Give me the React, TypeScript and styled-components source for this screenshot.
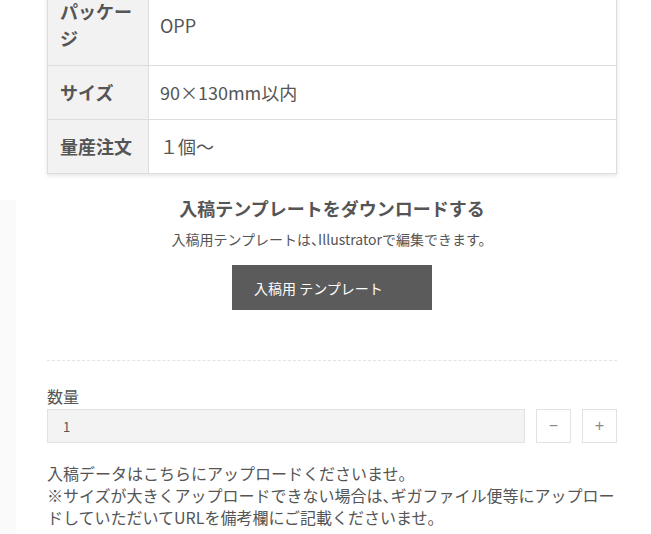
import styled, { createGlobalStyle } from "styled-components";

const GlobalStyle = createGlobalStyle`
  html, body {
    margin: 0;
    padding: 0;
    background: #fff linear-gradient(#fafafa, #fafafa) no-repeat 0 200px / 16px 100%;
    min-height: 100%;
  }
  body {
    font-family: "Noto Sans CJK JP", "Noto Sans", sans-serif;
    color: #555;
  }
`;

const specs = [
  { label: "パッケージ", value: "OPP" },
  { label: "サイズ", value: "90×130mm以内" },
  { label: "量産注文", value: "１個〜" },
];

const App = () => {
  return (
    <>
      <GlobalStyle />
      <Page>
        <SpecTable>
          <tbody>
            {specs.map((s) => (
              <tr key={s.label}>
                <th>{s.label}</th>
                <td>{s.value}</td>
              </tr>
            ))}
          </tbody>
        </SpecTable>

        <Download>
          <h3 className='title'>入稿テンプレートをダウンロードする</h3>
          <p className='note'>
            入稿用テンプレートは<Comma>、</Comma>Illustratorで編集できます。
          </p>
          <TemplateButton>入稿用 テンプレート</TemplateButton>
        </Download>

        <Divider />

        <Quantity>
          <label className='label'>数量</label>
          <div className='row'>
            <QtyInput type='text' defaultValue='1' readOnly />
            <StepButton>−</StepButton>
            <StepButton>+</StepButton>
          </div>
        </Quantity>

        <Notice>
          入稿データはこちらにアップロードくださいませ。
          <br />
          ※サイズが大きくアップロードできない場合は<Comma>、</Comma>
          ギガファイル便等にアップロードしていただいてURLを備考欄にご記載くださいませ。
        </Notice>
      </Page>
    </>
  );
};

export default App;

const Page = styled.div`
  width: 570px;
  margin: -16px 0 0 47px;
  display: flex;
  flex-direction: column;
`;

const SpecTable = styled.table`
  width: 100%;
  border-collapse: collapse;
  box-shadow: 0 2px 4px rgba(0, 0, 0, 0.1);

  th,
  td {
    border: 1px solid #ddd;
    padding: 13px 12px;
    font-size: 18px;
    line-height: 27px;
    vertical-align: middle;
    text-align: left;
    color: #555;
  }

  th {
    width: 76px;
    background-color: #f2f2f2;
    font-weight: bold;
  }

  td {
    background-color: #fff;
    font-weight: normal;
    padding-left: 11px;
  }
`;

// half-width punctuation like the original page
const Comma = styled.span`
  font-feature-settings: "halt";
`;

const Download = styled.div`
  margin-top: 21px;
  display: flex;
  flex-direction: column;
  align-items: center;

  .title {
    margin: 0;
    font-size: 18px;
    line-height: 26px;
    font-weight: bold;
    color: #555;
  }

  .note {
    margin: 8px 0 0;
    font-size: 14px;
    line-height: 20px;
  }
`;

const TemplateButton = styled.div`
  margin-top: 16px;
  width: 200px;
  height: 45px;
  box-sizing: border-box;
  padding-left: 22px;
  display: flex;
  align-items: center;
  background-color: #5b5b5b;
  color: #fff;
  font-size: 14px;
  cursor: pointer;
`;

const Divider = styled.hr`
  width: 100%;
  margin: 50px 0 0;
  border: none;
  border-top: 1px dashed #e3e3e3;
`;

const Quantity = styled.div`
  margin-top: 22px;

  .label {
    display: block;
    font-size: 16px;
    line-height: 26px;
  }

  .row {
    display: flex;
    align-items: center;
    gap: 11px;
  }
`;

const QtyInput = styled.input`
  flex: 1;
  height: 34px;
  box-sizing: border-box;
  border: 1px solid #e2e2e2;
  background-color: #f3f3f3;
  padding: 0 15px;
  font-family: "Noto Sans CJK JP", sans-serif;
  font-size: 13px;
  color: #555;
  outline: none;
`;

const StepButton = styled.button`
  width: 35px;
  height: 34px;
  box-sizing: border-box;
  border: 1px solid #e2e2e2;
  background-color: #fff;
  color: #888;
  font-size: 16px;
  padding: 0;
  cursor: pointer;
`;

const Notice = styled.p`
  margin: 19px 0 0;
  font-size: 16px;
  line-height: 22px;
  color: #555;
`;
